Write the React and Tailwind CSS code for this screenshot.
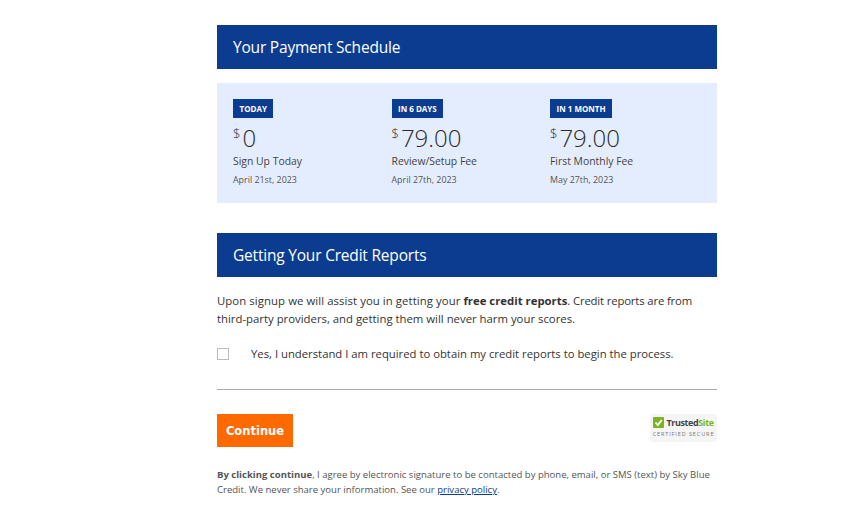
const font = { fontFamily: '"Open Sans", "Noto Sans", sans-serif' };

const payments = [
  { badge: "TODAY", amount: "0", label: "Sign Up Today", date: "April 21st, 2023", width: "w-[158.5px]" },
  { badge: "IN 6 DAYS", amount: "79.00", label: "Review/Setup Fee", date: "April 27th, 2023", width: "w-[158.5px]" },
  { badge: "IN 1 MONTH", amount: "79.00", label: "First Monthly Fee", date: "May 27th, 2023", width: "flex-1" },
];

function Header({ children }) {
  return (
    <h2 className="flex h-11 items-center bg-[#0c3c8f] pt-[2px] pl-4 text-[15.5px] font-normal tracking-[-0.2px] text-white">
      {children}
    </h2>
  );
}

function TrustedSite() {
  return (
    <div className="flex h-7 w-[67px] flex-col items-center rounded-sm bg-[#f5f5f5] pt-[3px]">
      <div className="flex items-center gap-[2px]">
        <svg width="11" height="11" viewBox="0 0 11 11">
          <rect width="11" height="11" rx="1" fill="#7ab51d" />
          <path d="M2.5 5.5 L4.8 8 L8.8 3" fill="none" stroke="#fff" strokeWidth="1.8" />
        </svg>
        <span className="text-[9px] leading-none font-bold tracking-[-0.4px] text-[#444]">
          Trusted<span className="text-[#7ab51d]">Site</span>
        </span>
      </div>
      <span className="mt-[4px] text-[5.5px] leading-none tracking-[0.9px] text-[#777]">CERTIFIED SECURE</span>
    </div>
  );
}

export default function App() {
  return (
    <div style={font} className="h-[519px] overflow-hidden bg-white pt-[25px] text-[#333]">
      <div className="ml-[217px] w-[500px]">
        <Header>Your Payment Schedule</Header>

        <div className="mt-[14px] flex h-[120px] bg-[#e4edfd] pt-4 pl-4">
          {payments.map((p) => (
            <div key={p.badge} className={p.width}>
              <span className="flex h-[19px] w-fit items-center bg-[#0c3c8f] px-[6.5px] text-[8px] font-bold text-white">
                {p.badge}
              </span>
              <div className="mt-[5px] flex h-[30px] items-start text-[#2b2b2b]">
                <span className="mt-[2px] text-[13px] leading-4 font-light">$</span>
                <span className="ml-[2px] text-[24px] leading-[30px] font-light">{p.amount}</span>
              </div>
              <div className="text-[10.4px] leading-[16px] text-[#444]">{p.label}</div>
              <div className="mt-[4px] text-[8.9px] leading-[14px] text-[#555]">{p.date}</div>
            </div>
          ))}
        </div>

        <div className="mt-[30px]">
          <Header>Getting Your Credit Reports</Header>
        </div>

        <p className="mt-[15px] text-[11.35px] leading-[18px] text-[#333]">
          <span className="tracking-[0.08px]">Upon signup we will assist you in getting your</span> <b>free credit reports</b>
          <span className="tracking-[-0.16px]">. Credit reports are from</span>
          <br />
          third-party providers, and getting them will never harm your scores.
        </p>

        <label className="mt-[17px] flex h-[18px] items-center text-[11.3px] text-[#333]">
          <span className="h-3 w-3 border border-[#bbb] bg-white" />
          <span className="ml-[22px]">Yes, I understand I am required to obtain my credit reports to begin the process.</span>
        </label>

        <hr className="mt-[26px] border-t border-[#aaa]" />

        <div className="mt-6 flex items-start justify-between">
          <button
            style={{ fontFamily: '"DejaVu Sans", sans-serif' }}
            className="h-[33px] w-[76px] bg-[#ff6a00] pt-[2px] text-[11.5px] font-bold text-white"
          >
            Continue
          </button>
          <TrustedSite />
        </div>

        <p className="mt-[20px] text-[9.54px] leading-[15px] text-[#555]">
          <b>By clicking continue</b>, I agree by electronic signature to be contacted by phone, email, or SMS (text) by Sky Blue
          <br />
          Credit. We never share your information. See our <a className="text-[#0c3c8f] underline">privacy policy</a>.
        </p>
      </div>
    </div>
  );
}
